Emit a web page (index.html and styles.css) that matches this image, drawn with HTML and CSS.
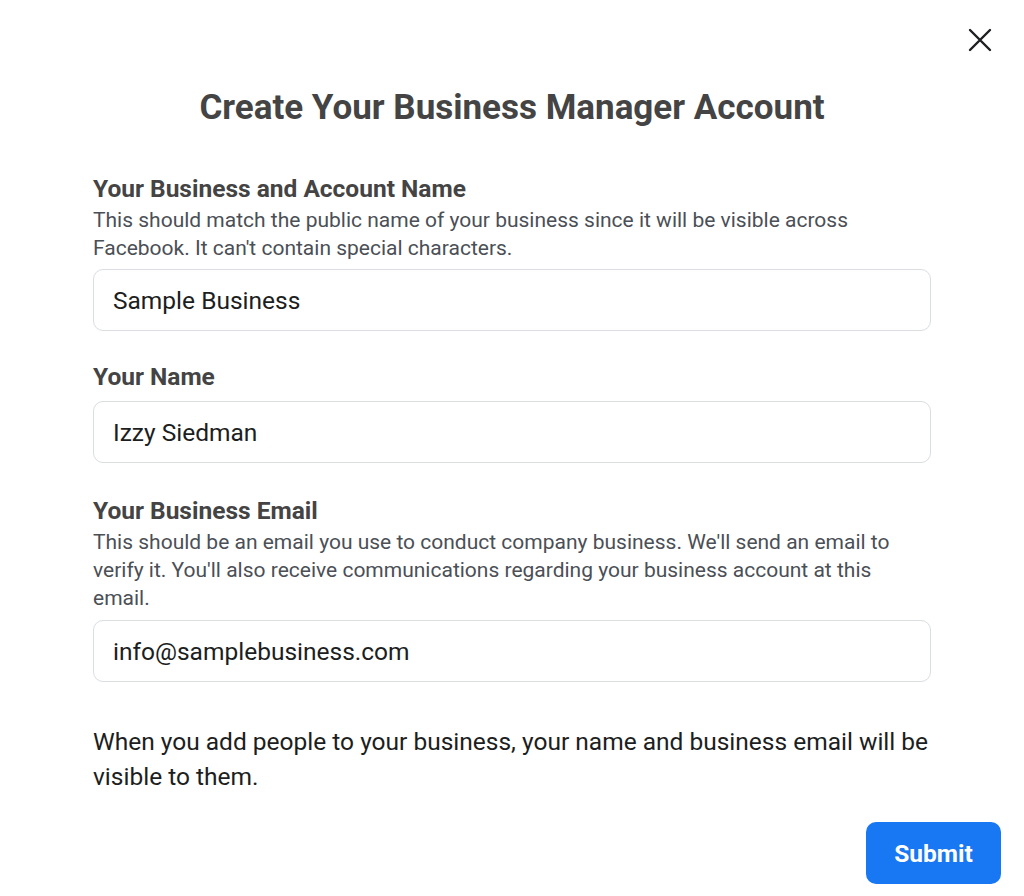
FILE: index.html
```html
<!DOCTYPE html>
<html lang="en">
<head>
    <meta charset="UTF-8">
    <meta name="viewport" content="width=device-width, initial-scale=1.0">
    <title>Create Your Business Manager Account</title>
    <link rel="stylesheet" href="styles.css">
</head>
<body>
    <div class="dialog">
        <div class="top-bar">
            <button class="close" type="button" aria-label="Close">
                <svg width="24" height="24" viewBox="0 0 24 24"><path d="M2 2 L22 22 M22 2 L2 22" stroke="#1c1e21" stroke-width="2.4" stroke-linecap="round" fill="none"/></svg>
            </button>
        </div>

        <h1>Create Your Business Manager Account</h1>

        <form class="form" id="bmForm">
            <label class="label" for="bizName">Your Business and Account Name</label>
            <p class="hint">This should match the public name of your business since it will be visible across Facebook. It can't contain special characters.</p>
            <input class="field" type="text" id="bizName" value="Sample Business">

            <label class="label no-hint" for="yourName">Your Name</label>
            <input class="field" type="text" id="yourName" value="Izzy Siedman">

            <label class="label email-label" for="bizEmail">Your Business Email</label>
            <p class="hint email-hint">This should be an email you use to conduct company business. We'll send an email to verify it. You'll also receive communications regarding your business account at this email.</p>
            <input class="field" type="email" id="bizEmail" value="info@samplebusiness.com">

            <p class="notice">When you add people to your business, your name and business email will be visible to them.</p>
        </form>

        <div class="footer">
            <button class="submit" type="button">Submit</button>
        </div>
    </div>
</body>
</html>
```

FILE: styles.css
```css
body {
    margin: 0;
    background: #fff;
    font-family: Roboto, "Liberation Sans", Arial, sans-serif;
    color: #1c1e21;
}
.dialog {
    width: 1024px;
    height: 896px;
    box-sizing: border-box;
}
.top-bar {
    display: flex;
    justify-content: flex-end;
    padding: 28px 32px 0 0;
    height: 30px;
}
.close {
    background: none;
    border: none;
    padding: 0;
    width: 24px;
    height: 24px;
    cursor: pointer;
}
h1 {
    margin: 30px 0 0;
    text-align: center;
    font-size: 35px;
    line-height: 40px;
    font-weight: 700;
    color: #444;
}
.form {
    padding: 47px 93px 0;
}
.label {
    display: block;
    font-size: 24.5px;
    line-height: 28px;
    font-weight: 700;
    color: #444;
    margin-top: 32px;
    margin-bottom: 3px;
}
.label:first-child {
    margin-top: 0;
}
.label.no-hint {
    margin-bottom: 10px;
}
.label.email-label {
    margin-top: 34px;
}
.hint {
    margin: 0 0 7px;
    font-size: 21px;
    line-height: 28px;
    color: #4b4f56;
}
.hint.email-hint {
    margin-bottom: 8px;
}
.field {
    display: block;
    width: 100%;
    height: 62px;
    box-sizing: border-box;
    padding: 0 19px;
    border: 1.5px solid #dadde1;
    border-radius: 10px;
    font-family: inherit;
    font-size: 24.5px;
    color: #1c1e21;
    background: #fff;
}
.notice {
    margin: 42px 0 0;
    font-size: 24.5px;
    line-height: 35px;
    color: #1c1e21;
}
.footer {
    display: flex;
    justify-content: flex-end;
    padding: 28px 23px 0 0;
}
.submit {
    width: 135px;
    height: 62px;
    background: #1877f2;
    color: #fff;
    border: none;
    border-radius: 10px;
    font-family: inherit;
    font-size: 24.5px;
    font-weight: 700;
    cursor: pointer;
}
```
